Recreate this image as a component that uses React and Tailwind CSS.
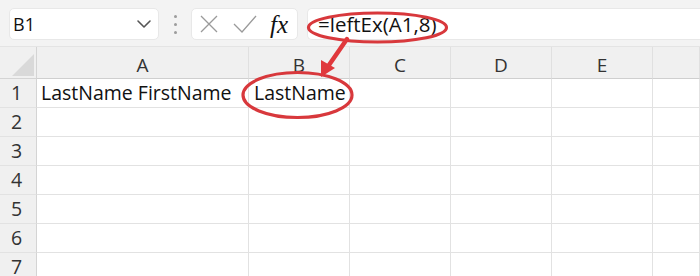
import React from 'react';

const cols = ['A', 'B', 'C', 'D', 'E', ''];
const rows = [1, 2, 3, 4, 5, 6, 7];

function Cell({ children }) {
  return (
    <div className="h-[29px] border-b border-r border-[#e2e2e2] bg-white flex items-center pl-[4px] text-[19.5px] text-[#111] whitespace-nowrap overflow-visible">
      {children}
    </div>
  );
}

export default function App() {
  return (
    <div className="relative w-[700px] h-[276px] overflow-hidden bg-white font-['Open_Sans',sans-serif]">
      {/* Formula bar strip */}
      <div className="h-[47px] bg-[#f3f3f3] border-b border-[#e4e4e4] flex items-start pt-[8px] pl-[9px]">
        <div className="w-[150px] h-[32px] bg-white rounded-[5px] border border-[#e8e8e8] flex items-center justify-between pl-[3px] pr-[6px]">
          <span className="text-[18px] text-[#111] leading-none">B1</span>
          <svg width="16" height="10" viewBox="0 0 16 10" fill="none" stroke="#555" strokeWidth="1.6" strokeLinecap="round" strokeLinejoin="round">
            <path d="M2 2l6 6 6-6" />
          </svg>
        </div>
        <div className="w-[32px] h-[32px] flex flex-col items-center justify-center gap-[5px]">
          <span className="w-[3px] h-[3px] rounded-full bg-[#9c9c9c]" />
          <span className="w-[3px] h-[3px] rounded-full bg-[#9c9c9c]" />
          <span className="w-[3px] h-[3px] rounded-full bg-[#9c9c9c]" />
        </div>
        <div className="w-[107px] h-[32px] bg-white rounded-[5px] border border-[#e8e8e8] flex items-center pl-[7px]">
          <svg width="20" height="20" viewBox="0 0 20 20" fill="none" stroke="#9a9a9a" strokeWidth="1.3">
            <path d="M2 2l16 16M18 2L2 18" />
          </svg>
          <svg className="ml-[13px]" width="26" height="20" viewBox="0 0 26 20" fill="none" stroke="#9a9a9a" strokeWidth="1.3">
            <path d="M2 10l8 8L24 2" />
          </svg>
          <span className="ml-[12px] text-[25px] leading-none text-[#111] italic font-['Liberation_Serif',serif]">fx</span>
        </div>
        <div className="ml-[9px] flex-1 h-[32px] bg-white rounded-l-[5px] border border-r-0 border-[#e8e8e8] flex items-center pl-[10px]">
          <span className="text-[20.5px] text-[#111] leading-none">=leftEx(A1,8)</span>
        </div>
      </div>

      {/* Sheet grid */}
      <div className="grid grid-cols-[37px_212px_101px_101px_101px_101px_1fr]">
        <div className="h-[32px] bg-[#f0f0f0] border-b border-r border-[#d4d4d4] relative">
          <svg className="absolute left-0 top-0" width="37" height="32" viewBox="0 0 37 32">
            <polygon points="34,7 34,29 12,29" fill="#d9d9d9" />
          </svg>
        </div>
        {cols.map((c, i) => (
          <div
            key={i}
            className="h-[32px] pt-[5px] bg-[#f0f0f0] border-b border-r border-b-[#cfcfcf] border-r-[#e0e0e0] flex items-center justify-center text-[19px] text-[#333]"
          >
            {c}
          </div>
        ))}
        {rows.map((r) => (
          <React.Fragment key={r}>
            <div className="h-[29px] pr-[3px] bg-[#f0f0f0] border-b border-r border-b-[#e2e2e2] border-r-[#d4d4d4] flex items-center justify-center text-[19.5px] text-[#333]">
              {r}
            </div>
            <Cell>{r === 1 ? 'LastName FirstName' : ''}</Cell>
            <Cell>{r === 1 ? <span className="pl-[1px]">LastName</span> : ''}</Cell>
            <Cell />
            <Cell />
            <Cell />
            <Cell />
          </React.Fragment>
        ))}
      </div>

      {/* Annotation */}
      <svg className="absolute left-0 top-0 pointer-events-none" width="700" height="276" viewBox="0 0 700 276" fill="none">
        <ellipse cx="377.5" cy="27.5" rx="69" ry="14.5" stroke="#d8383c" strokeWidth="3.2" />
        <ellipse cx="297.5" cy="95" rx="54.5" ry="22.5" stroke="#d8383c" strokeWidth="3.2" />
        <path d="M347 39L329 65" stroke="#e0383c" strokeWidth="4.5" strokeLinecap="round" />
        <polygon points="321,77 321,60 335,68" fill="#e0383c" />
      </svg>
    </div>
  );
}
